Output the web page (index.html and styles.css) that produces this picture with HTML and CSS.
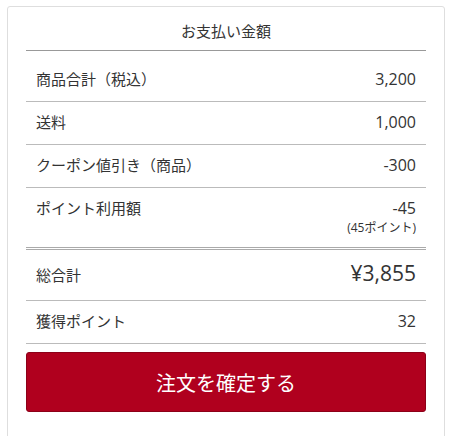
FILE: index.html
```html
<!DOCTYPE html>
<html lang="ja">
<head>
<meta charset="utf-8">
<link rel="stylesheet" href="styles.css">
</head>
<body>
<div class="card">
  <div class="title">お支払い金額</div>
  <div class="list">
    <div class="row"><span class="label">商品合計（税込）</span><span class="value">3,200</span></div>
    <div class="row"><span class="label">送料</span><span class="value">1,000</span></div>
    <div class="row"><span class="label">クーポン値引き（商品）</span><span class="value">-300</span></div>
    <div class="row row-double">
      <span class="label">ポイント利用額</span>
      <span class="value-stack"><span class="value">-45</span><span class="sub">(45ポイント)</span></span>
    </div>
    <div class="row row-total"><span class="label">総合計</span><span class="value total">¥3,855</span></div>
    <div class="row"><span class="label">獲得ポイント</span><span class="value">32</span></div>
  </div>
  <button class="submit">注文を確定する</button>
</div>
</body>
</html>
```

FILE: styles.css
```css
html, body {
  margin: 0;
  padding: 0;
  background: #fff;
}
body {
  font-family: "Noto Sans CJK JP", "Noto Sans", sans-serif;
  color: #333;
  padding: 6px 0 0 7px;
}
.card {
  width: 400px;
  padding: 0 18px 40px;
  border: 1px solid #dedede;
  border-radius: 3px;
  background: #fff;
}
.title {
  text-align: center;
  font-size: 15px;
  line-height: 22px;
  padding: 13px 0 8px;
  border-bottom: 1px solid #999;
}
.list {
  padding-top: 8px;
}
.row {
  display: flex;
  justify-content: space-between;
  align-items: flex-start;
  padding: 9px 10px 11px;
  border-bottom: 1px solid #bbb;
  font-size: 15px;
  line-height: 22px;
}
.value, .sub {
  font-family: "Open Sans", "Noto Sans CJK JP", sans-serif;
}
.value {
  font-size: 16px;
}
.row-double {
  padding-bottom: 10px;
  border-bottom: 3px double #aaa;
}
.value-stack {
  display: flex;
  flex-direction: column;
  align-items: flex-end;
}
.sub {
  font-size: 12px;
  line-height: 18px;
}
.row-total {
  align-items: baseline;
  padding-bottom: 13px;
}
.value.total {
  font-size: 21px;
  line-height: 28px;
}
.submit {
  display: block;
  width: 400px;
  height: 60px;
  margin-top: 8px;
  border: 1px solid #8c0018;
  border-radius: 3px;
  background: #b0001e;
  color: #fff;
  font-family: "Noto Sans CJK JP", "Noto Sans", sans-serif;
  font-size: 20px;
  padding: 0;
}
```
